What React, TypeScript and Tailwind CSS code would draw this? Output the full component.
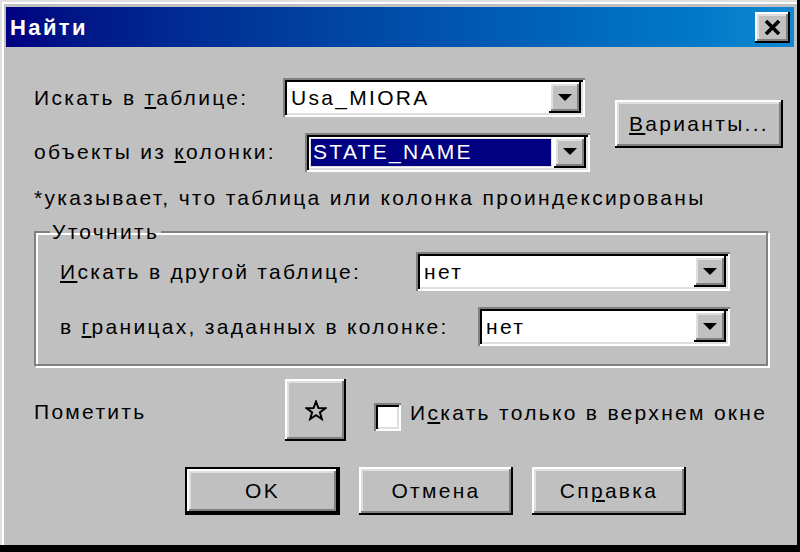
import React from "react"

const font = { fontFamily: '"Liberation Sans", Arial, sans-serif' }

const raised =
  "bg-[#c0c0c0] shadow-[inset_-2px_-2px_0_#000,inset_2px_2px_0_#fff,inset_-4px_-4px_0_#808080,inset_4px_4px_0_#dfdfdf]"
const sunken =
  "shadow-[inset_2px_2px_0_#808080,inset_-2px_-2px_0_#fff,inset_4px_4px_0_#000,inset_-4px_-4px_0_#dfdfdf]"

function Arrow() {
  return (
    <svg width="14" height="8" viewBox="0 0 14 8">
      <path d="M0 0 H14 L7 7 Z" fill="#000" />
    </svg>
  )
}

function Combo({
  value,
  width,
  selected = false,
}: {
  value: string
  width: string
  selected?: boolean
}) {
  return (
    <div className={`${width} h-[39px] bg-white ${sunken} flex items-stretch p-[4px]`}>
      <div className="flex-1 flex items-center pl-[1px] pr-[2px] py-[1px]">
        {selected ? (
          <div className="h-full w-full bg-[#000080] text-white flex items-center pl-[2px] border border-[#dfdfdf]">
            {value}
          </div>
        ) : (
          <span className="pl-[3px] text-black">{value}</span>
        )}
      </div>
      <div className={`w-[32px] ${raised} flex items-center justify-center`}>
        <Arrow />
      </div>
    </div>
  )
}

function Button({
  children,
  className = "",
  isDefault = false,
}: {
  children: React.ReactNode
  className?: string
  isDefault?: boolean
}) {
  if (isDefault) {
    return (
      <div className={`border-2 border-black ${className}`}>
        <div className={`w-full h-full ${raised} flex items-center justify-center`}>{children}</div>
      </div>
    )
  }
  return <div className={`${raised} flex items-center justify-center ${className}`}>{children}</div>
}

export default function App() {
  return (
    <div
      style={font}
      className="w-[800px] h-[552px] bg-[#c0c0c0] flex flex-col pt-[7px] px-[6px] text-[21px] tracking-[2.3px] text-black shadow-[inset_-3px_-7px_0_#000,inset_2px_2px_0_#dfdfdf,inset_4px_4px_0_#fff]"
    >
      {/* Title bar */}
      <div className="h-[40px] bg-linear-to-r from-[#000080] to-[#1288d2] flex items-center justify-between pl-[4px] pr-[4px]">
        <span className="text-white font-bold text-[22px] tracking-[2.4px]">Найти</span>
        <div className={`w-[35px] h-[31px] ${raised} flex items-center justify-center`}>
          <svg width="17" height="15" viewBox="0 0 17 15">
            <path d="M2 1 L15 14 M15 1 L2 14" stroke="#000" strokeWidth="3.6" />
          </svg>
        </div>
      </div>

      {/* Body */}
      <div className="flex-1 flex flex-col pl-[28px]">
        <div className="flex mt-[31px]">
          <div className="flex flex-col">
            <div className="flex items-center h-[39px]">
              <span className="w-[249px]">
                Искать в <u className="underline-offset-2">т</u>аблице:
              </span>
              <Combo value="Usa_MIORA" width="w-[302px]" />
            </div>
            <div className="flex items-center h-[40px] mt-[15px]">
              <span className="w-[271px]">
                объекты из <u className="underline-offset-2">к</u>олонки:
              </span>
              <Combo value="STATE_NAME" width="w-[285px]" selected />
            </div>
          </div>
          <Button className="w-[168px] h-[48px] mt-[22px] ml-[25px]">
            <span>
              <u className="underline-offset-2">В</u>арианты...
            </span>
          </Button>
        </div>

        <div className="mt-[12px] leading-[28px]">*указывает, что таблица или колонка проиндексированы</div>

        <fieldset className="mt-[8px] w-[734px] border-2 border-[#808080] shadow-[inset_2px_2px_0_#fff,2px_2px_0_#fff] pl-[24px] pr-[36px] pb-[18px]">
          <legend className="-ml-[10px] px-[2px] leading-[24px]">Уточнить</legend>
          <div className="flex items-center justify-between mt-[8px]">
            <span>
              <u className="underline-offset-2">И</u>скать в другой таблице:
            </span>
            <Combo value="нет" width="w-[314px]" />
          </div>
          <div className="flex items-center justify-between mt-[16px]">
            <span>
              в <u className="underline-offset-2">г</u>раницах, заданных в колонке:
            </span>
            <Combo value="нет" width="w-[252px]" />
          </div>
        </fieldset>

        <div className="flex items-center mt-[13px]">
          <span className="w-[251px] mt-[4px]">Пометить</span>
          <Button className="w-[61px] h-[62px]">
            <svg width="22" height="21" viewBox="0 0 22 21">
              <path
                d="M11 1.5 L13.4 8 L20.3 8.2 L14.9 12.4 L16.8 19 L11 15.2 L5.2 19 L7.1 12.4 L1.7 8.2 L8.6 8 Z"
                fill="none"
                stroke="#000"
                strokeWidth="2"
                strokeLinejoin="miter"
              />
            </svg>
          </Button>
          <div className={`w-[27px] h-[28px] bg-white ml-[28px] mt-[14px] ${sunken}`} />
          <span className="ml-[9px] mt-[6px]">
            И<u className="underline-offset-2">с</u>кать только в верхнем окне
          </span>
        </div>

        <div className="flex mt-[26px] ml-[151px] gap-[19px]">
          <Button isDefault className="w-[155px] h-[48px]">
            OK
          </Button>
          <Button className="w-[154px] h-[48px]">Отмена</Button>
          <Button className="w-[154px] h-[48px]">
            <span>
              Сп<u className="underline-offset-2">р</u>авка
            </span>
          </Button>
        </div>
      </div>
    </div>
  )
}
